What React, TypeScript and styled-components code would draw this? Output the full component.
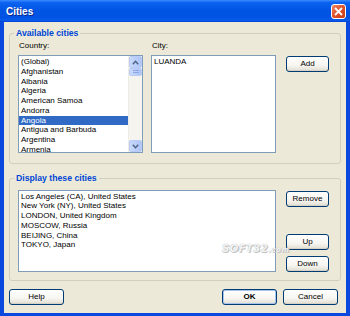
import React from "react";
import styled, { createGlobalStyle } from "styled-components";

const Global = createGlobalStyle`
  html, body { margin: 0; padding: 0; background: #ffffff; }
  * { box-sizing: border-box; }
`;

const Window = styled.div`
  position: relative;
  width: 350px;
  height: 316px;
  display: flex;
  flex-direction: column;
  background: #0b49de;
  font-family: "Liberation Sans", Arial, sans-serif;
  overflow: hidden;
`;

const TitleBar = styled.div`
  height: 22px;
  flex: none;
  display: flex;
  align-items: center;
  justify-content: space-between;
  padding: 0 4px 0 6px;
  background: linear-gradient(
    180deg,
    #3a8cff 0%,
    #0c62f0 12%,
    #0055e5 45%,
    #0052e2 80%,
    #0a5cec 92%,
    #0040d2 100%
  );
`;

const Title = styled.span`
  color: #ffffff;
  font-weight: bold;
  font-size: 10px;
  line-height: 12px;
  text-shadow: 1px 1px 0 #0f2a8a;
  margin-top: 1px;
`;

const CloseButton = styled.div`
  width: 15px;
  height: 15px;
  border: 1px solid #ffffff;
  border-radius: 3px;
  background: linear-gradient(135deg, #f08a68 0%, #e1542c 45%, #c83c16 100%);
  display: flex;
  align-items: center;
  justify-content: center;
  margin-top: 1px;
`;

const Body = styled.div`
  flex: 1;
  margin: 0 4px 3px 4px;
  background: #ece9d8;
  display: flex;
  flex-direction: column;
  padding: 11px 5px 8px 5px;
`;

const Group = styled.div<{ $height: number; $top?: number }>`
  position: relative;
  height: ${(p) => p.$height}px;
  margin-top: ${(p) => p.$top ?? 0}px;
  border: 1px solid #d0d0bf;
  border-radius: 3px;
  display: flex;
`;

const Legend = styled.span`
  position: absolute;
  top: -7px;
  left: 4px;
  padding: 0 2px;
  background: #ece9d8;
  color: #0046d5;
  font-weight: bold;
  font-size: 8.7px;
  line-height: 12px;
`;

const Column = styled.div<{ $width: number; $ml?: number; $pt?: number }>`
  width: ${(p) => p.$width}px;
  margin-left: ${(p) => p.$ml ?? 0}px;
  padding-top: ${(p) => p.$pt ?? 0}px;
  display: flex;
  flex-direction: column;
`;

const Label = styled.div`
  font-size: 8px;
  line-height: 10px;
  height: 10px;
  margin-bottom: 4px;
  color: #000;
  padding-left: 1px;
`;

const ListBox = styled.div<{ $height: number }>`
  position: relative;
  height: ${(p) => p.$height}px;
  background: #ffffff;
  border: 1px solid #7f9db9;
  display: flex;
  overflow: hidden;
`;

const Items = styled.div<{ $pt?: number }>`
  flex: 1;
  padding-top: ${(p) => p.$pt ?? 0}px;
  overflow: hidden;
`;

const Item = styled.div<{ $selected?: boolean }>`
  font-size: 8px;
  line-height: 9.75px;
  height: 9.75px;
  padding-left: 2px;
  white-space: nowrap;
  color: ${(p) => (p.$selected ? "#ffffff" : "#000000")};
  background: ${(p) => (p.$selected ? "#316ac5" : "transparent")};
`;

const ScrollBar = styled.div`
  width: 14px;
  flex: none;
  display: flex;
  flex-direction: column;
  background: #f5f4ef;
  border-left: 1px solid #eeede5;
`;

const ScrollBtn = styled.div<{ $h: number }>`
  height: ${(p) => p.$h}px;
  flex: none;
  margin: 0 0 0 0;
  border: 1px solid #b7cbf6;
  border-radius: 2px;
  background: linear-gradient(90deg, #c9d9fb 0%, #bccffa 50%, #aec5f6 100%);
  display: flex;
  align-items: center;
  justify-content: center;
`;

const Track = styled.div`
  flex: 1;
`;

const Button = styled.button<{ $width?: number; $default?: boolean }>`
  width: ${(p) => p.$width ?? 43}px;
  height: 16px;
  flex: none;
  padding: 0;
  border: 1px solid #003c74;
  border-radius: 3px;
  background: linear-gradient(180deg, #ffffff 0%, #f6f5f0 60%, #e6e3d8 90%, #d6d0c5 100%);
  font-family: "Liberation Sans", Arial, sans-serif;
  font-size: 8px;
  line-height: 14px;
  font-weight: ${(p) => (p.$default ? "bold" : "normal")};
  color: #000;
  box-shadow: ${(p) =>
    p.$default ? "inset 0 0 0 1px #a9c3ef" : "inset 0 -1px 0 #d6d0c5"};
`;

const ButtonStack = styled.div`
  display: flex;
  flex-direction: column;
  justify-content: space-between;
  height: 82px;
  padding-top: 1px;
  margin-left: 10px;
`;

const StackPair = styled.div`
  display: flex;
  flex-direction: column;
  gap: 6px;
`;

const Footer = styled.div`
  display: flex;
  align-items: center;
  margin-top: 8px;
  padding-right: 3px;
  gap: 6px;
`;

const Spacer = styled.div`
  flex: 1;
`;

const Watermark = styled.div`
  position: absolute;
  left: 222px;
  top: 243px;
  font-family: "DejaVu Sans", sans-serif;
  font-style: italic;
  font-weight: bold;
  font-size: 10px;
  letter-spacing: 0.5px;
  color: rgba(255, 255, 255, 0.9);
  text-shadow: 0 0 1px #9a9a9a, 1px 1px 0 #c8c8c8;
  pointer-events: none;
  white-space: nowrap;
`;

const WatermarkSmall = styled.span`
  font-size: 7px;
`;

const Chevron = ({ up }: { up?: boolean }) => (
  <svg width="7" height="5" viewBox="0 0 7 5">
    <path
      d={up ? "M0.8 4.2 L3.5 1.3 L6.2 4.2" : "M0.8 0.8 L3.5 3.7 L6.2 0.8"}
      fill="none"
      stroke="#4d6185"
      strokeWidth="1.4"
    />
  </svg>
);

const Grip = () => (
  <svg width="6" height="4" viewBox="0 0 6 4">
    <path d="M0 0.5 H6 M0 2.5 H6" stroke="#8aa6e8" strokeWidth="1" />
  </svg>
);

const countries = [
  "(Global)",
  "Afghanistan",
  "Albania",
  "Algeria",
  "American Samoa",
  "Andorra",
  "Angola",
  "Antigua and Barbuda",
  "Argentina",
  "Armenia",
];

const displayed = [
  "Los Angeles (CA), United States",
  "New York (NY), United States",
  "LONDON, United Kingdom",
  "MOSCOW, Russia",
  "BEIJING, China",
  "TOKYO, Japan",
];

export default function App() {
  return (
    <>
      <Global />
      <Window>
        <TitleBar>
          <Title>Cities</Title>
          <CloseButton>
            <svg width="9" height="9" viewBox="0 0 9 9">
              <path d="M1 1 L8 8 M8 1 L1 8" stroke="#ffffff" strokeWidth="1.8" />
            </svg>
          </CloseButton>
        </TitleBar>
        <Body>
          <Group $height={131}>
            <Legend>Available cities</Legend>
            <Column $width={125} $ml={8} $pt={7}>
              <Label>Country:</Label>
              <ListBox $height={98}>
                <Items $pt={1}>
                  {countries.map((c) => (
                    <Item key={c} $selected={c === "Angola"}>
                      {c}
                    </Item>
                  ))}
                </Items>
                <ScrollBar>
                  <ScrollBtn $h={12}>
                    <Chevron up />
                  </ScrollBtn>
                  <ScrollBtn $h={8}>
                    <Grip />
                  </ScrollBtn>
                  <Track />
                  <ScrollBtn $h={12}>
                    <Chevron />
                  </ScrollBtn>
                </ScrollBar>
              </ListBox>
            </Column>
            <Column $width={125} $ml={8} $pt={7}>
              <Label>City:</Label>
              <ListBox $height={98}>
                <Items $pt={1}>
                  <Item>LUANDA</Item>
                </Items>
              </ListBox>
            </Column>
            <Column $width={43} $ml={10} $pt={22}>
              <Button>Add</Button>
            </Column>
          </Group>
          <Group $height={103} $top={14}>
            <Legend>Display these cities</Legend>
            <Column $width={258} $ml={8} $pt={11}>
              <ListBox $height={82}>
                <Items $pt={0.5}>
                  {displayed.map((c) => (
                    <Item key={c}>{c}</Item>
                  ))}
                </Items>
              </ListBox>
            </Column>
            <Column $width={53} $pt={11}>
              <ButtonStack>
                <Button>Remove</Button>
                <StackPair>
                  <Button>Up</Button>
                  <Button>Down</Button>
                </StackPair>
              </ButtonStack>
            </Column>
          </Group>
          <Footer>
            <Button $width={55}>Help</Button>
            <Spacer />
            <Button $width={55} $default>
              OK
            </Button>
            <Button $width={55}>Cancel</Button>
          </Footer>
        </Body>
        <Watermark>
          SOFT32<WatermarkSmall>.com</WatermarkSmall>
        </Watermark>
      </Window>
    </>
  );
}
